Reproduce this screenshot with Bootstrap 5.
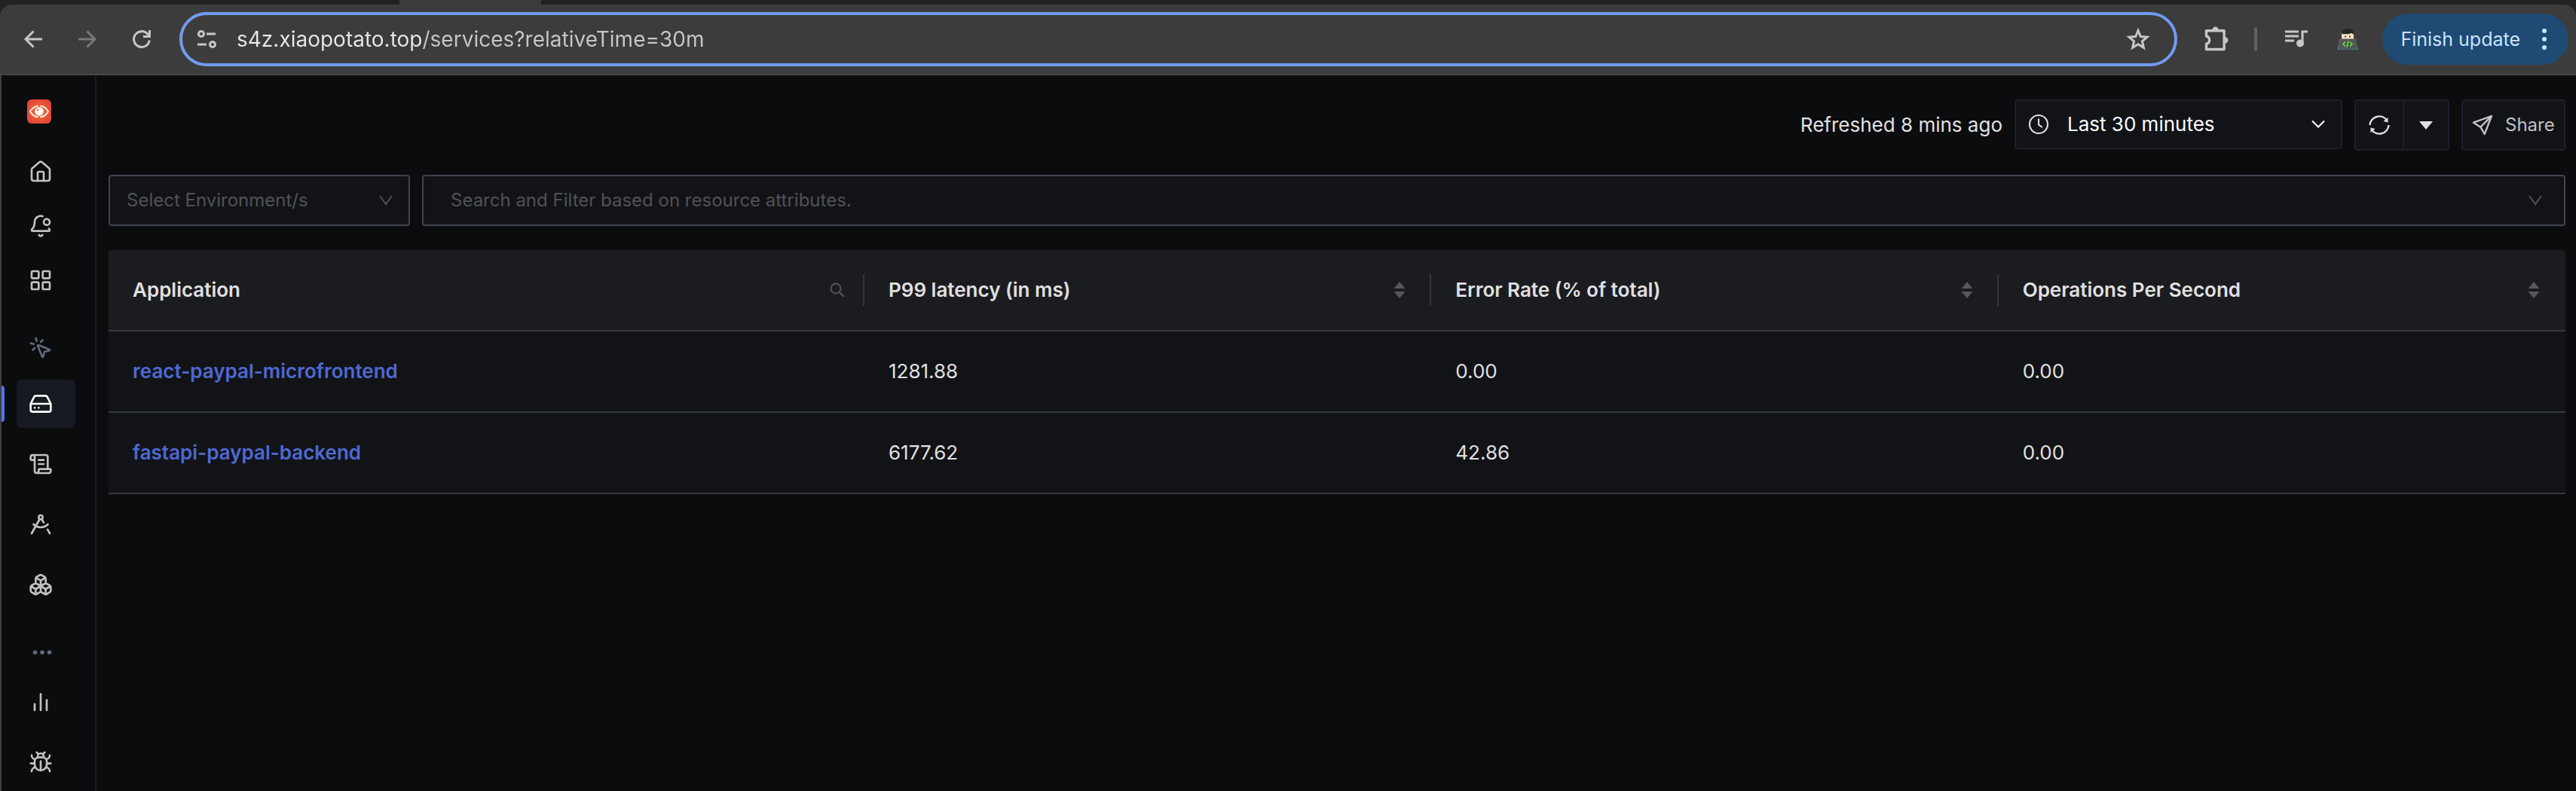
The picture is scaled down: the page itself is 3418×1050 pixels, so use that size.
<!DOCTYPE html>
<html lang="en" data-bs-theme="dark">
<head>
<meta charset="utf-8">
<meta name="viewport" content="width=device-width, initial-scale=1">
<title>Services</title>
<link href="https://cdn.jsdelivr.net/npm/bootstrap@5.3.0/dist/css/bootstrap.min.css" rel="stylesheet">
<style>
  body { background: #0b0c0e; color: #e0e0e0; font-family: Inter, "Liberation Sans", sans-serif; font-size: 26px; line-height: 32px; }
  svg { display: block; flex: none; }
  .ico { width: 32px; height: 32px; fill: none; stroke: currentColor; stroke-width: 2; stroke-linecap: round; stroke-linejoin: round; }
  .bare { background: none; border: 0; padding: 0; color: inherit; display: block; }

  /* browser toolbar */
  .chrome-top { background: #202221; }
  .tabstrip { height: 6px; padding-left: 530px; }
  .tab-edge { width: 188px; height: 6px; background: #3c3c3c; }
  .toolbar { height: 94px; background: #3c3c3c; border-bottom: 2px solid #444746; border-radius: 16px 16px 0 0; padding: 8px 10px 8px 28px; color: #c7c7c7; }
  .navs { gap: 40px; margin-right: 34px; }
  .omnibox { height: 72px; border: 4px solid #719bf2; border-radius: 36px; padding: 0 32px 0 16px; gap: 24px; }
  .omnibox input { font-size: 28px; line-height: 36px; color: transparent; background: linear-gradient(90deg, #e8e8e8 248px, #c7c7c7 248px); -webkit-background-clip: text; background-clip: text; outline: 0; }
  .tools { gap: 32px; margin: 0 30px 0 34px; }
  .tool-rule { width: 4px; height: 32px; background: #5f6060; border-radius: 2px; }
  .update-btn { height: 68px; border-radius: 34px; background: #1f4a73; color: #c8e4ff; font-size: 25px; padding: 0 24px; gap: 24px; }

  /* sidebar */
  .side { width: 128px; border-left: 2px solid #3f3f40; border-right: 2px solid #181a22; color: #c0c1c3; padding-top: 32px; height: calc(100vh - 100px); }
  .side .logo { margin: 0 0 32px 34px; }
  .side a { color: inherit; display: flex; align-items: center; width: 78px; height: 64px; margin: 0 0 16px 20px; padding-left: 16px; border-radius: 6px; }
  .side a.tight { margin-bottom: 8px; }
  .side a.dim { color: #62687c; height: 44px; margin: 36px 0 20px 20px; }
  .side a.active { background: #171920; color: #fff; position: relative; }
  .side a.active::before { content: ""; position: absolute; left: -22px; top: 8px; width: 6px; height: 48px; background: #4e74f8; border-radius: 0 4px 4px 0; }
  .side .more { color: #62687c; height: 40px; width: 78px; margin: 38px 0 14px 20px; padding-left: 20px; }

  /* page */
  .page { padding: 32px 14px 0 16px; }
  .box { background: #121317; border: 2px solid #1d1f2a; border-radius: 4px; }
  .picker { width: 435px; height: 66px; padding: 0 20px 0 14px; gap: 22px; color: #fff; }
  .picker input { min-width: 0; color: #fff; background: none; border: 0; padding: 0; outline: 0; }
  .bar { gap: 16px; margin-bottom: 32px; }
  .refresh { width: 126px; height: 68px; }
  .refresh button { height: 100%; }
  .refresh .drop { border-left: 2px solid #1d1f2a; width: 60px; }
  .share { width: 138px; height: 68px; color: #c0c1c3; font-size: 24px; padding-left: 10px; gap: 14px; }
  .filters { gap: 16px; margin-bottom: 32px; color: #515256; font-size: 24px; }
  .filters .box { height: 68px; border-color: #3f4350; padding: 0 20px 0 22px; }
  .filters .env { width: 400px; }
  .filters .attrs { padding: 0 28px 0 36px; }
  .filters select, .filters input { appearance: none; background: none; border: 0; color: #515256; padding: 0; outline: 0; min-width: 0; }
  .filters input::placeholder { color: #515256; opacity: 1; }
  .chev { width: 20px; height: 14px; fill: none; stroke: currentColor; stroke-width: 2; }
  .svc { table-layout: fixed; border-collapse: separate; border-spacing: 0; background: #121317; color: #e0e0e0; border-radius: 4px 4px 0 0; overflow: hidden; }
  .svc th, .svc td { border-bottom: 2px solid #353a42; height: 108px; padding: 0 32px; vertical-align: middle; }
  .svc th { background: #1b1c20; font-weight: 600; padding-right: 0; }
  .svc th > div { height: 42px; border-right: 2px solid #33363b; padding-right: 32px; }
  .svc th:first-child > div { padding-right: 24px; }
  .svc th:last-child > div { border: 0; padding-right: 34px; }
  .svc td a { color: #4e69d2; font-weight: 600; text-decoration: none; }
  .svc .c-app { width: 1003px; }
  .svc button { color: #56575a; }
</style>
<script src="https://cdn.jsdelivr.net/npm/bootstrap@5.3.0/dist/js/bootstrap.bundle.min.js"></script>
</head>
<body>
<header class="chrome-top">
  <div class="tabstrip"><div class="tab-edge"></div></div>
  <div class="toolbar d-flex align-items-center">
    <div class="navs d-flex">
      <button class="bare" aria-label="Back"><svg class="ico" viewBox="0 0 32 32" style="stroke-width:3;stroke-linecap:butt;stroke-linejoin:miter"><path d="M28 16H6M16.500 5.500L6 16l10.500 10.500"/></svg></button>
      <button class="bare" aria-label="Forward"><svg class="ico" viewBox="0 0 32 32" style="stroke:#797979;stroke-width:3;stroke-linecap:butt;stroke-linejoin:miter"><path d="M4 16h22M15.500 5.500L26 16 15.500 26.500"/></svg></button>
      <button class="bare" aria-label="Reload"><svg class="ico" viewBox="0 0 32 32" style="stroke-width:3;stroke-linecap:butt;stroke-linejoin:miter"><path d="M26.300 17.500A10.400 10.400 0 1 1 23.500 8.800L26 11.500M26.500 4v8.500H18"/></svg></button>
    </div>
    <div class="omnibox d-flex align-items-center flex-grow-1">
      <button class="bare" aria-label="Site information"><svg class="ico" viewBox="0 0 32 32" style="stroke-width:3;stroke-linecap:butt"><circle cx="9" cy="9" r="3.500"/><path d="M16 9h12M4 23h12"/><circle cx="24" cy="23" r="3.500"/></svg></button>
      <input class="bare flex-grow-1" type="text" aria-label="Address" value="s4z.xiaopotato.top/services?relativeTime=30m" spellcheck="false">
      <button class="bare" aria-label="Bookmark"><svg class="ico" viewBox="0 0 32 32" style="stroke-width:3;stroke-linejoin:miter"><path d="M16 4.500l3.300 8 8.700.7-6.600 5.700 2 8.400L16 22.800l-7.400 4.500 2-8.400L4 13.200l8.700-.7z"/></svg></button>
    </div>
    <div class="tools d-flex align-items-center">
      <button class="bare" aria-label="Extensions"><svg class="ico" viewBox="0 0 32 32" style="width:36px;height:36px;stroke-width:3"><path d="M4 6h21v22H4v-6.500a4.600 4.600 0 0 0 0-9z"/><path d="M11.500 5a3.200 3.200 0 0 1 6.400 0zM26 14a3.200 3.200 0 0 1 0 6.400z" fill="currentColor" stroke-width="1"/></svg></button>
      <span class="tool-rule"></span>
      <button class="bare" aria-label="Media"><svg class="ico ms-1" viewBox="0 0 32 32" style="stroke-width:3;stroke-linecap:butt;stroke-linejoin:miter"><path d="M1 6h18M1 12h18M1 18h12M24 22V6h7"/><circle cx="21" cy="21.500" r="5" fill="currentColor" stroke="none"/></svg></button>
      <button class="bare" aria-label="Profile"><svg class="ms-1" width="32" height="32" viewBox="0 0 32 32"><path d="M2 30l3-11h22l3 11z" fill="#2f8496"/><path d="M8 8h16v9H8z" fill="#f7dcc4"/><path d="M8.500 10V8c0-4.500 3-6 8-6S24 4.500 24 8v2c-1-1-2-2-3-2-4 2-8 1-10 1-2 0-2.500 1-2.500 1z" fill="#262626"/><circle cx="13" cy="12.500" r="1" fill="#222"/><circle cx="19" cy="12.500" r="1" fill="#222"/><rect x="4" y="15.500" width="24" height="14" rx="1" fill="#565656"/><path d="M13 19.500l-3 3 3 3M19 19.500l3 3-3 3M17 18.500l-2 8" fill="none" stroke="#56f032" stroke-width="1.500"/></svg></button>
    </div>
    <button class="update-btn bare d-flex align-items-center">Finish update
      <svg width="16" height="32" viewBox="0 0 16 32" fill="currentColor"><circle cx="8" cy="5" r="3"/><circle cx="8" cy="16" r="3"/><circle cx="8" cy="27" r="3"/></svg></button>
  </div>
</header>

<div class="d-flex">
  <nav class="side flex-shrink-0 overflow-hidden" aria-label="Main">
    <svg class="logo" width="32" height="32" viewBox="0 0 32 32"><defs><radialGradient id="lg"><stop offset="0" stop-color="#ee7a30"/><stop offset="1" stop-color="#e5483a"/></radialGradient></defs><rect width="32" height="32" rx="6" fill="url(#lg)"/><path d="M4 16C7 11 11 8.800 14 8.800M4 16c3 5 7 7.200 10 7.200M28 16c-3-5-7-7.200-10-7.200M28 16c-3 5-7 7.200-10 7.200" fill="none" stroke="#fff" stroke-width="1.800" stroke-linecap="round"/><circle cx="16" cy="16" r="5.800" fill="#fff"/><circle cx="14" cy="14" r="1.200" fill="#e85c37"/></svg>
    <a href="#" class="tight" aria-label="Home"><svg class="ico" viewBox="0 0 24 24"><path d="M15 21v-8a1 1 0 0 0-1-1h-4a1 1 0 0 0-1 1v8"/><path d="M3 10a2 2 0 0 1 .709-1.528l7-5.999a2 2 0 0 1 2.582 0l7 5.999A2 2 0 0 1 21 10v9a2 2 0 0 1-2 2H5a2 2 0 0 1-2-2z"/></svg></a>
    <a href="#" class="tight" aria-label="Alerts"><svg class="ico" viewBox="0 0 24 24"><path d="M10.268 21a2 2 0 0 0 3.464 0M13.916 2.314A6 6 0 0 0 6 8c0 4.499-1.411 5.956-2.740 7.327A1 1 0 0 0 4 17h16a1 1 0 0 0 .74-1.673 9 9 0 0 1-.585-.665"/><circle cx="18" cy="8" r="3"/></svg></a>
    <a href="#" class="tight" aria-label="Dashboards"><svg class="ico" viewBox="0 0 24 24"><rect width="7" height="7" x="3" y="3" rx="1"/><rect width="7" height="7" x="14" y="3" rx="1"/><rect width="7" height="7" x="14" y="14" rx="1"/><rect width="7" height="7" x="3" y="14" rx="1"/></svg></a>
    <a href="#" class="dim" aria-label="Shortcuts"><svg class="ico" viewBox="0 0 24 24"><path d="M14 4.100 12 6M5.100 8l-2.900-.8M6 12l-1.900 2M7.200 2.200 8 5.100M9.037 9.690a.498.498 0 0 1 .653-.653l11 4.500a.5.5 0 0 1-.074.949l-4.349 1.041a1 1 0 0 0-.740.739l-1.040 4.350a.5.5 0 0 1-.950.074z"/></svg></a>
    <a href="#" class="active" aria-label="Services" aria-current="page"><svg class="ico" viewBox="0 0 24 24"><path d="M22 12H2M5.450 5.110 2 12v6a2 2 0 0 0 2 2h16a2 2 0 0 0 2-2v-6l-3.450-6.890A2 2 0 0 0 16.760 4H7.240a2 2 0 0 0-1.790 1.110zM6 16h.01M10 16h.01"/></svg></a>
    <a href="#" aria-label="Logs"><svg class="ico" viewBox="0 0 24 24"><path d="M15 12h-5M15 8h-5M19 17V5a2 2 0 0 0-2-2H4"/><path d="M8 21h12a2 2 0 0 0 2-2v-1a1 1 0 0 0-1-1H11a1 1 0 0 0-1 1v1a2 2 0 1 1-4 0V5a2 2 0 1 0-4 0v2a1 1 0 0 0 1 1h3"/></svg></a>
    <a href="#" aria-label="Traces"><svg class="ico" viewBox="0 0 24 24"><path d="m12.990 6.740 1.930 3.440M19.136 12a10 10 0 0 1-14.271 0M21 21l-2.160-3.840M3 21l8.020-14.260"/><circle cx="12" cy="5" r="2"/></svg></a>
    <a href="#" class="mb-0" aria-label="Infrastructure"><svg class="ico" viewBox="0 0 24 24"><path d="M2.970 12.920A2 2 0 0 0 2 14.630v3.240a2 2 0 0 0 .970 1.710l3 1.800a2 2 0 0 0 2.060 0L12 19v-5.500l-5-3zM7 16.500l-4.740-2.850M7 16.500l5-3M7 16.500v5.170M12 13.500V19l3.970 2.380a2 2 0 0 0 2.060 0l3-1.800a2 2 0 0 0 .970-1.710v-3.240a2 2 0 0 0-.970-1.710L17 10.500zM17 16.500l-5-3M17 16.500l4.740-2.850M17 16.500v5.170M7.970 4.420A2 2 0 0 0 7 6.130v4.370l5 3 5-3V6.130a2 2 0 0 0-.970-1.710l-3-1.800a2 2 0 0 0-2.060 0zM12 8l-4.740-2.850M12 8l4.740-2.850M12 13.500V8"/></svg></a>
    <button class="more bare" aria-label="More"><svg width="28" height="8" viewBox="0 0 28 8" fill="currentColor"><circle cx="4.500" cy="4" r="2.800"/><circle cx="14" cy="4" r="2.800"/><circle cx="23.500" cy="4" r="2.800"/></svg></button>
    <a href="#" aria-label="Metrics"><svg class="ico" viewBox="0 0 24 24"><path d="M12 20V4M18 20V10M6 20v-6"/></svg></a>
    <a href="#" class="mb-0" aria-label="Exceptions"><svg class="ico" viewBox="0 0 24 24"><path d="M12 20v-9M14 7a4 4 0 0 1 4 4v3a6 6 0 0 1-12 0v-3a4 4 0 0 1 4-4zM14.120 3.880 16 2M21 21a4 4 0 0 0-3.810-4M21 5a4 4 0 0 1-3.550 3.970M22 13h-4M3 21a4 4 0 0 1 3.810-4M3 5a4 4 0 0 0 3.550 3.970M6 13H2M8 2l1.880 1.880M9 7.130V6a3 3 0 1 1 6 0v1.130"/></svg></a>
  </nav>

  <main class="page flex-grow-1">
    <div class="bar d-flex justify-content-end">
      <div class="d-flex gap-3 align-items-center">
        <span>Refreshed 8 mins ago</span>
        <label class="picker box d-flex align-items-center align-self-start">
          <svg class="ico" viewBox="0 0 24 24" style="stroke-width:1.600;color:#dcdcdc"><circle cx="12" cy="12" r="9"/><path d="M12 7v5.500l3 2"/></svg>
          <input class="flex-grow-1" type="text" aria-label="Time range" value="Last 30 minutes" readonly>
          <svg class="chev" viewBox="0 0 20 14"><path d="M2 2.500l8 8 8-8"/></svg>
        </label>
      </div>
      <div class="refresh box d-flex">
        <button class="bare flex-grow-1 d-flex align-items-center justify-content-center" aria-label="Refresh"><svg class="ico" viewBox="0 0 32 32" style="stroke-width:2.500;stroke-linecap:butt"><path d="M3.500 16A12.500 12.500 0 0 1 26 9.500M28.500 16A12.500 12.500 0 0 1 6 22.500"/><path d="M27.500 6v6.500l-6-1.500zM4.500 26v-6.500l6 1.500z" fill="currentColor" stroke="none"/></svg></button>
        <button class="drop bare d-flex align-items-center justify-content-center" aria-label="Refresh interval"><svg width="18" height="12" viewBox="0 0 18 12"><path d="M0 1h18L9 12z" fill="currentColor"/></svg></button>
      </div>
      <button class="share box d-flex align-items-center"><svg class="ico" viewBox="0 0 24 24" style="stroke-width:1.800"><path d="M21 3 3 9.500l7 4.500 4 7zM21 3 10 14"/></svg>Share</button>
    </div>

    <div class="filters d-flex">
      <label class="env box d-flex align-items-center">
        <select class="flex-grow-1" aria-label="Environments"><option>Select Environment/s</option></select>
        <svg class="chev" viewBox="0 0 20 14"><path d="M2 1l8 11 8-11"/></svg>
      </label>
      <label class="attrs box d-flex align-items-center flex-grow-1">
        <input class="flex-grow-1" type="text" aria-label="Resource attributes" placeholder="Search and Filter based on resource attributes.">
        <svg class="chev" viewBox="0 0 20 14"><path d="M2 1l8 11 8-11"/></svg>
      </label>
    </div>

    <table class="svc w-100">
      <colgroup><col class="c-app"><col><col><col></colgroup>
      <thead>
        <tr>
          <th scope="col"><div class="d-flex align-items-center justify-content-between">Application<button class="bare" aria-label="Search applications"><svg width="20" height="20" viewBox="0 0 20 20" fill="none" stroke="currentColor" stroke-width="2"><circle cx="8" cy="8" r="6.500"/><path d="M13 13l6 6"/></svg></button></div></th>
          <th scope="col"><div class="d-flex align-items-center justify-content-between">P99 latency (in ms)<button class="bare" aria-label="Sort by latency"><svg width="16" height="22" viewBox="0 0 16 22" fill="currentColor"><path d="M8 0l7.500 9H.5zM8 22l7.500-9H.5z"/></svg></button></div></th>
          <th scope="col"><div class="d-flex align-items-center justify-content-between">Error Rate (% of total)<button class="bare" aria-label="Sort by error rate"><svg width="16" height="22" viewBox="0 0 16 22" fill="currentColor"><path d="M8 0l7.500 9H.5zM8 22l7.500-9H.5z"/></svg></button></div></th>
          <th scope="col"><div class="d-flex align-items-center justify-content-between">Operations Per Second<button class="bare" aria-label="Sort by operations"><svg width="16" height="22" viewBox="0 0 16 22" fill="currentColor"><path d="M8 0l7.500 9H.5zM8 22l7.500-9H.5z"/></svg></button></div></th>
        </tr>
      </thead>
      <tbody>
        <tr><td><a href="#">react-paypal-microfrontend</a></td><td>1281.88</td><td>0.00</td><td>0.00</td></tr>
        <tr><td><a href="#">fastapi-paypal-backend</a></td><td>6177.62</td><td>42.86</td><td>0.00</td></tr>
      </tbody>
    </table>
  </main>
</div>
</body>
</html>
